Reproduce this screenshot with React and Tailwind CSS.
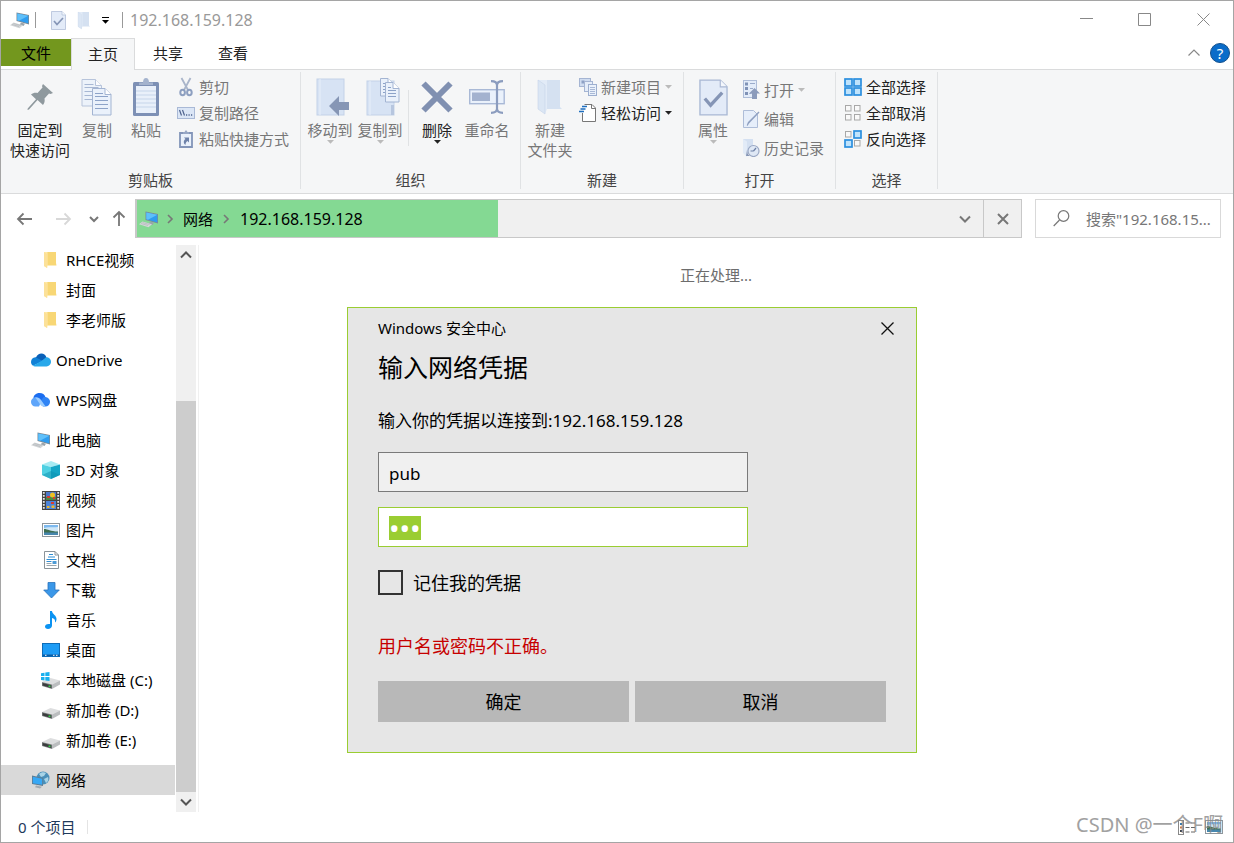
import React, { useEffect, useRef } from "react";

/* ---------- icons ---------- */

const PcIcon = ({ className = "" }) => (
  <svg width="20" height="18" viewBox="0 0 20 18" className={className}>
    <path d="M6.5 1.5 19 4v9.5L6.5 10z" fill="#7d8a94" />
    <path d="M7.3 2.5 18.3 4.7v7.7L7.3 9.2z" fill="#2f9df0" />
    <path d="M7.3 2.5 18.3 4.7 9 9.7l-1.7-.5z" fill="#5fc0fa" />
    <path d="m11 11.5 4 1.2-1.5 2.3-4-1z" fill="#9aa4ab" />
    <path d="m3.5 11.5 9.5 2.7-3.5 3L0 14.3z" fill="#d3d6d8" />
    <path d="m3.5 12.5 7 2m-8.5-1 7 2" stroke="#b1b6ba" strokeWidth=".7" />
  </svg>
);

const DocCheckIcon = ({ width, height }) => (
  <svg width={width} height={height} viewBox="0 0 30 38">
    <path d="M1 1h21l7 7v29H1z" fill="#e3ebf8" stroke="#a9b8d4" strokeWidth="1.4" />
    <path d="M22 1v7h7" fill="#f4f7fc" stroke="#a9b8d4" strokeWidth="1.2" />
    <path d="m6 20 6 7 12-13" fill="none" stroke="#8595b6" strokeWidth="3.4" />
  </svg>
);

const FolderPaleIcon = ({ width, height }) => (
  <svg width={width} height={height} viewBox="0 0 26 38">
    <path d="M9 2h14v27l2 2H9z" fill="#d5e1f1" />
    <path d="M1 2h9v29l-2 5-7-5z" fill="#e2ebf7" />
    <path d="M1 2 8 7v29l-7-5z" fill="#dbe6f4" stroke="#c7d5e9" strokeWidth=".6" />
  </svg>
);

const PinIcon = () => (
  <svg width="26" height="26" viewBox="0 0 26 26" fill="#8f999e">
    <path d="m16 0 10 9-2.5 1-1.5-.5-4.5 5c.5 2.5 0 4.5-1.5 6.5L10.5 16 2 25.5.5 26l.2-1.5L9 15.2 4 10.5C6 9 8 8.5 10.5 9l5-5.5L15 2z" />
  </svg>
);

const PageLines = ({ x, y, w = 18, h = 25, step = 3 }) => (
  <g transform={`translate(${x} ${y})`}>
    <path d={`M.5.5H${w - 6}L${w} 6.5V${h}H.5z`} fill="#eaf1fb" stroke="#a3b4d2" />
    <path d={`M${w - 6} .5v6h6`} fill="#fff" stroke="#a3b4d2" />
    {Array.from({ length: Math.floor((h - 9) / step) }, (_, i) => (
      <path key={i} d={`M3 ${8.5 + i * step}h${w - 6}`} stroke="#8da3c8" />
    ))}
    <path d={`M3 5.5h${w - 11}`} stroke="#8da3c8" />
  </g>
);

const CopyIcon = () => (
  <svg width="32" height="38" viewBox="0 0 32 38">
    <g opacity=".75">
      <PageLines x={0.5} y={1} w={20} h={27} step={4} />
    </g>
    <PageLines x={11} y={10} w={19} h={27} step={4} />
  </svg>
);

const PasteIcon = () => (
  <svg width="26" height="38" viewBox="0 0 26 38">
    <rect x="0" y="4" width="26" height="34" rx="1.5" fill="#7d90b5" />
    <rect x="3" y="8" width="20" height="27" fill="#e9f0fa" />
    <path d="M3 13h20M3 17h20M3 21h20M3 25h20M3 29h20" stroke="#c6d5ea" />
    <path d="M6 7V4.5h4C10 2 11 0 13 0s3 2 3 4.5h4V7z" fill="#a4b3ce" />
  </svg>
);

const CutIcon = () => (
  <svg width="14" height="20" viewBox="0 0 14 20" fill="none" stroke="#8d9fc0">
    <path d="M2.5 1 9 13M11.5 1 5 13" stroke="#a9b5ca" strokeWidth="1.8" />
    <ellipse cx="3.6" cy="15.5" rx="2.3" ry="2.8" strokeWidth="2" />
    <ellipse cx="10.4" cy="15.5" rx="2.3" ry="2.8" strokeWidth="2" />
  </svg>
);

const CopyPathIcon = () => (
  <svg width="18" height="12" viewBox="0 0 18 12">
    <rect x=".5" y=".5" width="17" height="11" fill="#dbe6f6" stroke="#a9b9d6" />
    <path d="m2.5 3 2 5.5M5.5 3l2 5.5" stroke="#4f648f" strokeWidth="1.2" />
    <path d="M9 8h1.2M11.5 8h1.2M14 8h1.2" stroke="#4f648f" strokeWidth="1.4" />
  </svg>
);

const PasteLinkIcon = () => (
  <svg width="14" height="18" viewBox="0 0 14 18">
    <path d="M1 3h12v14H1z" fill="#eaf1fb" stroke="#8395b9" strokeWidth="1.8" />
    <path d="M4 4V2h1.5L7 0l1.5 2H10v2z" fill="#97a7c5" />
    <path d="M5 7.5h5v5L8.5 11C7 12 6.5 13 6.5 15 4 13 4.5 10.5 6.5 9z" fill="#6e82aa" />
  </svg>
);

const MoveToIcon = () => (
  <svg width="34" height="38" viewBox="0 0 34 38" className="ml-[6px]">
    <rect x="1" y="1" width="27" height="36" fill="#d7e3f4" stroke="#c3d1e8" />
    <path d="M4 1v36" stroke="#e8eff9" />
    <path d="M13 28 23 18v6h10v8H23v6z" fill="#8696b5" />
  </svg>
);

const CopyToIcon = () => (
  <svg width="34" height="38" viewBox="0 0 34 38" className="ml-[6px]">
    <rect x="1" y="3" width="27" height="34" fill="#d7e3f4" stroke="#c3d1e8" />
    <path d="M4 3v34" stroke="#e8eff9" />
    <path d="M25 27h3v10h-3z" fill="#b7c6df" />
    <PageLines x={14} y={0} w={14} h={18} />
    <PageLines x={19} y={4} w={14} h={20} />
  </svg>
);

const DeleteIcon = () => (
  <svg width="32" height="32" viewBox="0 0 32 32">
    <path d="m2.5 2.5 27 27m0-27-27 27" stroke="#8090b1" strokeWidth="6" />
  </svg>
);

const RenameIcon = () => (
  <svg width="36" height="34" viewBox="0 0 36 34" fill="none">
    <rect x=".7" y="9.7" width="34.5" height="14" fill="#eaf1fb" stroke="#a9b9d6" strokeWidth="1.4" />
    <rect x="3" y="12.5" width="18" height="8.5" fill="#a3b2cf" />
    <path d="M22 1.2c3 0 6 1 6 4v23.6c0 3-3 4-6 4M34 1.2c-3 0-6 1-6 4v23.6c0 3 3 4 6 4" stroke="#8b9cbe" strokeWidth="2.2" />
  </svg>
);

const NewItemIcon = () => (
  <svg width="18" height="18" viewBox="0 0 18 18">
    <rect x=".5" y=".5" width="11" height="8" fill="#cfdcf0" stroke="#a5b5d3" />
    <rect x="2.5" y="2.5" width="3" height="3" fill="#8ea1c5" />
    <rect x="5.5" y="3.5" width="8" height="10" fill="#e5edf9" stroke="#a5b5d3" />
    <rect x="9.5" y="6.5" width="8" height="11" fill="#eaf1fb" stroke="#9dafcf" />
    <path d="M11 9.5h5M11 11.5h5M11 13.5h5M11 15.5h5" stroke="#a9b9d6" />
  </svg>
);

const EasyAccessIcon = () => (
  <svg width="18" height="18" viewBox="0 0 18 18" fill="none">
    <path d="M3.5 9v8.5h13V4L13 .5H5.5" fill="#fff" stroke="#777" />
    <path d="M12.5.5v4h4" stroke="#777" />
    <path d="M3 2.5h5M1.5 5h5M0 7.5h5" stroke="#1f6fc0" strokeWidth="1.3" />
  </svg>
);

const OpenIcon = () => (
  <svg width="17" height="19" viewBox="0 0 17 19">
    <rect x=".5" y=".5" width="13" height="17" fill="#e3ecf9" stroke="#aebdd8" />
    <path d="M2 2.5h3v3H2zM2 7h3v3H2zM2 12h3v3H2z" fill="#7f92b6" />
    <path d="M7 3.5h5M7 8.5h3M6.5 13.5h2" stroke="#9aabca" />
    <path d="m11.5 8 5.5 5.5h-3V19H9v-5.5H6z" fill="#8b9bbb" />
  </svg>
);

const EditIcon = () => (
  <svg width="17" height="18" viewBox="0 0 17 18">
    <path d="M.5.5h10l4 4v13H.5z" fill="#e6eefa" stroke="#aebdd8" />
    <path d="M16.5 2.5 6 13.5 4.5 16l-.8-.8L5 12 15.5 1.5z" fill="#8fa0c1" />
  </svg>
);

const HistoryIcon = () => (
  <svg width="18" height="18" viewBox="0 0 18 18">
    <path d="M1 0h10v14H1z" fill="#d4e0f1" />
    <path d="m1 0 4 2.5V18l-4-4z" fill="#e2ebf7" />
    <circle cx="11.5" cy="12" r="5.5" fill="#dfe8f5" stroke="#9aa8c4" strokeWidth="1.2" />
    <path d="M11.5 12 14 9M11.5 12h-3" stroke="#6d7fa5" strokeWidth="1.2" />
    <path d="M5 11c0 3 1 5 3 6H4z" fill="#8696b5" />
  </svg>
);

const GridIcon = ({ on }) => (
  <svg width="18" height="18" viewBox="0 0 18 18">
    {[[0, 0], [9, 0], [0, 9], [9, 9]].map(([x, y], i) =>
      on[i] ? (
        <rect key={i} x={x + 1} y={y + 1} width="7" height="7" fill="#bfe3fc" stroke="#2b8fdf" strokeWidth="1.7" />
      ) : (
        <rect key={i} x={x + 1.5} y={y + 1.5} width="5.5" height="5.5" fill="#f9f9f9" stroke="#a8a8a8" />
      )
    )}
  </svg>
);

const Caret = ({ className = "" }) => (
  <svg width="7" height="4" viewBox="0 0 7 4" className={className}>
    <path d="M0 0h7L3.5 3.7z" fill="currentColor" />
  </svg>
);

const FolderIcon = () => (
  <svg width="14" height="18" viewBox="0 0 14 18">
    <path d="M2 1h10v11l.5 2.5H2z" fill="#f8d775" />
    <path d="M0 1h3.5v13L3 17l-3-2z" fill="#ffe9a6" />
    <path d="M0 1 3.2 3v14L0 15z" fill="#fce199" />
  </svg>
);

const OneDriveIcon = () => (
  <svg width="20" height="14" viewBox="0 0 20 14">
    <path d="M5 4.5C7-1 14-1 15.5 4.5L10 9 4 5z" fill="#0a60b8" />
    <path d="M4.5 4.3C1.5 4.5 0 6.500 0 9c0 1.500.8 3 2 3.800L12 8z" fill="#1181d6" />
    <path d="M15 4.3c3 0 5 2 5 4.500s-2 4.700-4.500 4.700H4c-1 0-1.600-.3-2-.7L12 7z" fill="#28a8ea" />
  </svg>
);

const WpsIcon = () => (
  <svg width="20" height="14" viewBox="0 0 20 14">
    <path d="M2.5 6C2 2.500 5 0 8.500 0c3 0 5.300 1.500 6 4.200L11 10z" fill="#1b6df0" />
    <path d="M4 4.300C1.500 4.800 0 6.800 0 9c0 2.600 2 4.500 4.300 4.500H8L10 9z" fill="#5ea5fa" />
    <path d="M12.500 4.200c3.500-.8 6.500 1.600 6.500 4.700 0 2.600-2 4.600-4.700 4.600H12L9.500 8z" fill="#2f84f5" />
    <path d="M4 4.300c2.600-.5 4.500.5 6 2.700l3.500 5c.5.800 1 1.300 1.800 1.500H13c-2 0-3-.8-4-2.200L7.500 9C6.500 7.500 5.500 6 4 4.300z" fill="#9accff" />
  </svg>
);

const CubeIcon = () => (
  <svg width="18" height="18" viewBox="0 0 18 18">
    <path d="m9 0 9 3.500L9 6 0 3.500z" fill="#a6ebf3" />
    <path d="M0 3.500 9 6v12l-9-4z" fill="#4ed0e2" />
    <path d="M18 3.500 9 6v12l9-4z" fill="#14a6c6" />
    <path d="m0 14 9-4 9 4-9 4z" fill="#0b8fae" opacity=".5" />
  </svg>
);

const VideoIcon = () => (
  <svg width="18" height="19" viewBox="0 0 18 19">
    <path d="M0 0h18v19H0z" fill="#444" />
    <path d="M1.8 1v18M16.2 1v18" stroke="#e8e8e8" strokeWidth="1.8" strokeDasharray="1.7 1.3" />
    <path d="M4 1h10v8H4z" fill="#4d78c9" />
    <path d="M4 10h10v8H4z" fill="#4d84d9" />
    <path d="M4 6h10v3H4z" fill="#4c8b45" />
    <circle cx="10.5" cy="4" r="2.5" fill="#f0c221" />
    <path d="M5 5h3v2H5zM11 6h2v2h-2zM9 11h3v2H9z" fill="#da3b2d" />
    <path d="M5 15h2.5v2H5zM9.500 14.500h3V17h-3z" fill="#e9b62e" />
  </svg>
);

const PictureIcon = () => (
  <svg width="18" height="14" viewBox="0 0 18 14">
    <rect x=".5" y=".5" width="17" height="13" fill="#fff" stroke="#8f979d" />
    <path d="M2 2h14v10H2z" fill="#7db9ef" />
    <path d="M2 5c4-1.500 8 0 14-1v5H2z" fill="#cfe7f8" />
    <path d="M2 6c4 0 6 2.500 14 2.500V10H2z" fill="#3e6e50" />
    <path d="M2 9.500h14V12H2z" fill="#4787ae" />
  </svg>
);

const DocIcon = () => (
  <svg width="15" height="18" viewBox="0 0 15 18">
    <path d="M.5.5H11L14.5 4v13.500H.5z" fill="#fff" stroke="#8a9399" />
    <path d="M11 .5V4h3.500" fill="none" stroke="#8a9399" />
    <path d="M5 3.500h4M4 6h7M2.500 8.500h10M2.500 10.500h5" stroke="#2f8ed4" strokeWidth="1.2" />
    <path d="M2.500 12.500h5M2.500 14.500h10" stroke="#9aa6ae" />
    <path d="M8.500 10h4v3h-4z" fill="#4d9bd5" />
  </svg>
);

const DownloadIcon = () => (
  <svg width="17" height="17" viewBox="0 0 17 17">
    <path d="M5 .5h7V8h4.300l-7.800 8L.7 8H5z" fill="#3a97e8" stroke="#2a72bb" strokeWidth=".8" />
  </svg>
);

const MusicIcon = () => (
  <svg width="12" height="18" viewBox="0 0 12 18" fill="#0b93f2">
    <path d="M5 0h2c0 3 5 4.500 4.500 8.500-.2 1.500-.8 2.500-1.500 3C10.500 8.500 9 7.500 7 7v7.500C7 16.500 5 18 3 18s-3-1-3-2.500S1.500 12.500 5 13z" />
  </svg>
);

const DesktopIcon = () => (
  <svg width="18" height="14" viewBox="0 0 18 14">
    <rect x=".5" y=".5" width="17" height="13" fill="#1e9cf5" stroke="#0d6cb8" />
    <path d="M1 11.500h16V13H1z" fill="#0a5ca5" />
    <path d="M3 12.300h1.500M11 12.300h1.500M14 12.300h1.500" stroke="#fff" />
  </svg>
);

const DriveIcon = ({ system }) => (
  <svg width="20" height="17" viewBox="0 0 20 17">
    <path d="M1 10 9.500 6 19 8.500 11 12.500z" fill="#dddedf" />
    <path d="m1 10 10 2.500V17L1 14z" fill="#7b7e80" />
    <path d="m1.700 11 8.600 2.200v2.800l-8.600-2.500z" fill="#3b3d3e" />
    <path d="M11 12.500 19 8.500v4L11 17z" fill="#bbbdbf" />
    <path d="M7.500 13.500h2V15h-2z" fill="#33d24a" />
    {system && <path d="M0 1.200 3.500.7v3.400H0zM4.300.6 8.500 0v4.100H4.300zM0 5h3.500v3.400L0 8zM4.300 5h4.200v4l-4.200-.5z" fill="#19b0ee" />}
  </svg>
);

const NetworkIcon = () => (
  <svg width="20" height="18" viewBox="0 0 20 18">
    <circle cx="12" cy="7" r="6.5" fill="#4a8fb8" />
    <path d="M8 3c2-2 5-2.500 7-1l-2 3-3 1zM13 8l4-2c1 2 0 5-2 6z" fill="#a8d3e6" />
    <path d="M1 4.500 12 7v8L1 13z" fill="#5d7c93" />
    <path d="M1.800 5.700 11.200 7.700v6l-9.400-1.500z" fill="#37a8f5" />
    <path d="m5 14.500 6 1.200-2 1.800-5-1.200z" fill="#a3abb1" />
  </svg>
);

const Chevron = ({ d, size = 12, width = 2, className = "" }) => (
  <svg width={size} height={size} viewBox="0 0 12 12" fill="none" stroke="currentColor" strokeWidth={width} className={className}>
    <path d={d} />
  </svg>
);

/* ---------- ribbon pieces ---------- */

const BigButton = ({ icon, lines, className = "text-[#777]", caret }) => (
  <button className={`flex flex-col items-center whitespace-nowrap leading-5 ${className}`}>
    <span className="flex h-[42px] items-center pb-1">{icon}</span>
    {lines.map((line) => (
      <span key={line}>{line}</span>
    ))}
    {caret && <Caret className={caret} />}
  </button>
);

const SmallButton = ({ icon, label, className = "h-[26px] text-[#777]", caret }) => (
  <button className={`flex items-center gap-1 whitespace-nowrap ${className}`}>
    <span className="flex w-[18px] justify-center">{icon}</span>
    <span>{label}</span>
    {caret && <Caret className={caret} />}
  </button>
);

const Group = ({ label, className, children }) => (
  <div className={`flex shrink-0 flex-col justify-between pb-[3px] ${className}`}>
    <div className="flex grow items-start">{children}</div>
    <div className="text-center leading-5 text-[#444]">{label}</div>
  </div>
);

const Divider = () => <div className="mt-[2px] mb-1 w-px shrink-0 bg-[#e0e2e4]" />;

const Ribbon = () => (
  <div className="flex h-[124px] border-b border-[#dadbdc] bg-[#f5f6f7]">
    <Group label="剪贴板" className="w-[299px]">
      <div className="flex pt-2">
        <BigButton icon={<PinIcon />} lines={["固定到", "快速访问"]} className="w-[78px] text-[#222]" />
        <BigButton icon={<CopyIcon />} lines={["复制"]} className="w-[36px] text-[#777]" />
        <BigButton icon={<PasteIcon />} lines={["粘贴"]} className="w-[62px] text-[#777]" />
      </div>
      <div className="pt-1">
        <SmallButton icon={<CutIcon />} label="剪切" />
        <SmallButton icon={<CopyPathIcon />} label="复制路径" />
        <SmallButton icon={<PasteLinkIcon />} label="粘贴快捷方式" />
      </div>
    </Group>
    <Divider />
    <Group label="组织" className="w-[219px]">
      <div className="flex pt-2 pl-1">
        <BigButton icon={<MoveToIcon />} lines={["移动到"]} className="w-[50px] text-[#777]" caret="text-[#bbb]" />
        <BigButton icon={<CopyToIcon />} lines={["复制到"]} className="w-[50px] text-[#777]" caret="text-[#bbb]" />
        <div className="mx-[3px] mt-3 h-[56px] w-px bg-[#e0e2e4]" />
        <BigButton icon={<DeleteIcon />} lines={["删除"]} className="w-[50px] text-[#222]" caret="text-[#222]" />
        <BigButton icon={<RenameIcon />} lines={["重命名"]} className="w-[50px] text-[#777]" />
      </div>
    </Group>
    <Divider />
    <Group label="新建" className="w-[162px]">
      <div className="pt-2">
        <BigButton icon={<FolderPaleIcon width={26} height={38} />} lines={["新建", "文件夹"]} className="w-[58px] text-[#777]" />
      </div>
      <div className="pt-1">
        <SmallButton icon={<NewItemIcon />} label="新建项目" caret="text-[#bbb]" />
        <SmallButton icon={<EasyAccessIcon />} label="轻松访问" className="h-[26px] text-[#222]" caret="text-[#222]" />
      </div>
    </Group>
    <Divider />
    <Group label="打开" className="w-[151px]">
      <div className="pt-2">
        <BigButton icon={<DocCheckIcon width={29} height={37} />} lines={["属性"]} className="w-[58px] text-[#777]" caret="text-[#bbb]" />
      </div>
      <div className="pt-[5px]">
        <SmallButton icon={<OpenIcon />} label="打开" className="h-[29px] text-[#777]" caret="text-[#bbb]" />
        <SmallButton icon={<EditIcon />} label="编辑" className="h-[29px] text-[#777]" />
        <SmallButton icon={<HistoryIcon />} label="历史记录" className="h-[29px] text-[#777]" />
      </div>
    </Group>
    <Divider />
    <Group label="选择" className="w-[101px]">
      <div className="pt-1 pl-2">
        <SmallButton icon={<GridIcon on={[1, 1, 1, 1]} />} label="全部选择" className="h-[26px] text-[#222]" />
        <SmallButton icon={<GridIcon on={[0, 0, 0, 0]} />} label="全部取消" className="h-[26px] text-[#222]" />
        <SmallButton icon={<GridIcon on={[0, 1, 1, 0]} />} label="反向选择" className="h-[26px] text-[#222]" />
      </div>
    </Group>
    <Divider />
  </div>
);

/* ---------- sidebar ---------- */

const places = [
  { name: "RHCE视频", icon: <FolderIcon />, nested: true },
  { name: "封面", icon: <FolderIcon />, nested: true },
  { name: "李老师版", icon: <FolderIcon />, nested: true },
  { name: "OneDrive", icon: <OneDriveIcon />, gap: true },
  { name: "WPS网盘", icon: <WpsIcon />, gap: true },
  { name: "此电脑", icon: <PcIcon />, gap: true },
  { name: "3D 对象", icon: <CubeIcon />, nested: true },
  { name: "视频", icon: <VideoIcon />, nested: true },
  { name: "图片", icon: <PictureIcon />, nested: true },
  { name: "文档", icon: <DocIcon />, nested: true },
  { name: "下载", icon: <DownloadIcon />, nested: true },
  { name: "音乐", icon: <MusicIcon />, nested: true },
  { name: "桌面", icon: <DesktopIcon />, nested: true },
  { name: "本地磁盘 (C:)", icon: <DriveIcon system />, nested: true },
  { name: "新加卷 (D:)", icon: <DriveIcon />, nested: true },
  { name: "新加卷 (E:)", icon: <DriveIcon />, nested: true },
  { name: "网络", icon: <NetworkIcon />, gap: true, active: true },
];

const Sidebar = () => (
  <div className="flex shrink-0 border-r border-[#f0f0f0] pr-[2px]">
    <ul className="w-[174px] text-black">
      {places.map((p) => (
        <li key={p.name} className={p.gap ? "mt-[10px]" : ""}>
          <a
            href="#"
            className={`flex h-[30px] items-center gap-[5px] whitespace-nowrap ${p.nested ? "pl-10" : "pl-[30px]"} ${p.active ? "bg-[#d9d9d9]" : ""}`}
          >
            <span className="flex w-5 justify-center">{p.icon}</span>
            {p.name}
          </a>
        </li>
      ))}
    </ul>
    <div className="ml-px flex w-5 flex-col items-center bg-[#f0f0f0] text-[#555]">
      <Chevron d="M1 8.500 6 3.500l5 5" className="mt-1" />
      <div className="mt-[140px] w-full grow bg-[#cdcdcd]" />
      <Chevron d="M1 3.500 6 8.500l5-5" className="my-1" />
    </div>
  </div>
);

/* ---------- credential dialog ---------- */

const CredentialDialog = () => {
  const passwordRef = useRef(null);

  useEffect(() => {
    passwordRef.current.focus();
    passwordRef.current.select();
  }, []);

  return (
    <form
      className="absolute top-[62px] left-[148px] w-[570px] border border-[#9acd32] bg-[#e6e6e6] px-[30px] pb-[30px] text-[18px] text-black"
      onSubmit={(e) => e.preventDefault()}
    >
      <div className="flex h-10 items-center justify-between text-[15px]">
        <span>Windows 安全中心</span>
        <button type="button" aria-label="关闭" className="-mr-3 p-1">
          <svg width="13" height="13" viewBox="0 0 13 13" stroke="#111" strokeWidth="1.3">
            <path d="m.5.5 12 12m0-12-12 12" />
          </svg>
        </button>
      </div>
      <h1 className="text-[25px] leading-[38px]">输入网络凭据</h1>
      <p className="mt-[23px] text-[17px] leading-6">输入你的凭据以连接到:192.168.159.128</p>
      <input
        aria-label="用户名"
        defaultValue="pub"
        className="mt-[19px] block h-10 w-[370px] border border-[#7a7a7a] bg-[#f0f0f0] px-[10px] pt-[2px] text-[17px] outline-none"
      />
      <div className="mt-[15px] flex h-10 w-[370px] items-center border border-[#9acd32] bg-white px-[10px] pt-[2px]">
        <input
          ref={passwordRef}
          type="password"
          aria-label="密码"
          defaultValue="123"
          className="h-6 w-full overflow-clip text-[28px] leading-6 outline-none selection:bg-[#9acd32] selection:text-white"
        />
      </div>
      <label className="mt-[23px] flex h-[25px] items-center gap-[10px]">
        <input type="checkbox" className="size-[25px] appearance-none border-2 border-[#333]" />
        记住我的凭据
      </label>
      <p className="mt-[39px] leading-6 text-[#c60000]">用户名或密码不正确。</p>
      <div className="mt-[23px] flex gap-[6px]">
        <button className="h-[41px] flex-1 bg-[#b8b8b8]">确定</button>
        <button type="button" className="h-[41px] flex-1 bg-[#b8b8b8]">取消</button>
      </div>
    </form>
  );
};

/* ---------- window ---------- */

const TitleBar = () => (
  <div className="flex h-[38px] items-center pl-[9px] text-[16px] text-[#999]">
    <PcIcon />
    <div className="ml-[5px] h-4 w-px bg-[#999]" />
    <button aria-label="属性" className="ml-[15px]">
      <DocCheckIcon width={15} height={19} />
    </button>
    <button aria-label="新建文件夹" className="ml-[11px]">
      <FolderPaleIcon width={14} height={19} />
    </button>
    <button aria-label="自定义快速访问工具栏" className="ml-[11px] flex flex-col items-center gap-[2px] text-black">
      <span className="h-px w-[7px] bg-black" />
      <Caret />
    </button>
    <div className="ml-[13px] h-4 w-px bg-[#999]" />
    <span className="ml-[7px]">192.168.159.128</span>
    <div className="ml-auto flex pb-[2px] text-[#888]">
      <button aria-label="最小化" className="flex w-[58px] justify-center">
        <svg width="13" height="13" viewBox="0 0 13 13" stroke="currentColor"><path d="M0 5.500h13" /></svg>
      </button>
      <button aria-label="最大化" className="flex w-[58px] justify-center">
        <svg width="13" height="13" viewBox="0 0 13 13" fill="none" stroke="currentColor"><path d="M.5.5h12v12H.5z" /></svg>
      </button>
      <button aria-label="关闭" className="flex w-[60px] justify-center">
        <svg width="13" height="13" viewBox="0 0 13 13" stroke="currentColor"><path d="m.5.5 12 12m0-12-12 12" /></svg>
      </button>
    </div>
  </div>
);

const TabBar = () => (
  <div className="flex h-[31px] border-b border-[#dadbdc] text-[#222]">
    <button className="h-[27px] w-[70px] bg-[#73971e] text-black">文件</button>
    <button className="-mt-px -mb-px w-[64px] border border-b-0 border-[#dadbdc] bg-[#f5f6f7] pb-[2px]">主页</button>
    <button className="w-[66px] pb-[2px]">共享</button>
    <button className="w-[64px] pb-[2px]">查看</button>
    <div className="ml-auto flex items-center pr-[3px] pb-[2px]">
      <Chevron d="M.5 8.500 6 3l5.500 5.500" width={1.2} className="mr-[10px] text-[#888]" />
      <button aria-label="帮助" className="flex size-5 items-center justify-center rounded-full border border-[#14508c] bg-[#0a6cc9] text-white">?</button>
    </div>
  </div>
);

const loaded = 0.408;

const AddressBar = () => (
  <div className="flex items-center pt-[5px] pr-3 pb-[7px] text-[#777]">
    <div className="flex w-[134px] items-center pl-[15px]">
      <svg width="17" height="14" viewBox="0 0 17 14" fill="none" stroke="#777" strokeWidth="1.8"><path d="M16 7H2M7.500 1.500 2 7l5.500 5.500" /></svg>
      <svg width="17" height="14" viewBox="0 0 17 14" fill="none" stroke="#d8d8d8" strokeWidth="1.8" className="ml-[22px]"><path d="M1 7h14M9.500 1.500 15 7l-5.500 5.500" /></svg>
      <Chevron d="M2 4l4 4 4-4" className="ml-4" />
      <svg width="14" height="17" viewBox="0 0 14 17" fill="none" stroke="#777" strokeWidth="1.8" className="ml-3"><path d="M7 16V2M1.500 7.500 7 2l5.500 5.500" /></svg>
    </div>
    <div className="relative flex h-[39px] min-w-0 flex-1 items-center border border-l-2 border-[#c8c8c8] bg-[#f0f0f0]">
      {/* fills up behind the crumbs while the location loads */}
      <div className="absolute inset-y-0 left-0 bg-[#84d993]" style={{ width: `${loaded * 100}%` }} />
      <div className="relative flex grow items-center pl-[2px] text-black">
        <PcIcon />
        <Chevron d="M4 2l4 4-4 4" width={1.6} className="ml-[5px] text-[#777]" />
        <span className="ml-[7px]">网络</span>
        <Chevron d="M4 2l4 4-4 4" width={1.6} className="ml-[7px] text-[#777]" />
        <span className="ml-2 text-[16px]">192.168.159.128</span>
      </div>
      <button aria-label="历史位置" className="relative px-3">
        <Chevron d="M1 3.500 6 8.500l5-5" />
      </button>
      <button aria-label="停止" className="relative flex h-full w-[38px] items-center justify-center border-l border-[#c8c8c8]">
        <Chevron d="m1 1 10 10M11 1 1 11" />
      </button>
    </div>
    <label className="ml-[13px] flex h-[39px] w-[186px] items-center border border-[#d9d9d9] pl-[17px]">
      <svg width="17" height="17" viewBox="0 0 17 17" fill="none" stroke="#777" strokeWidth="1.2" className="shrink-0">
        <circle cx="10.5" cy="6" r="5.3" />
        <path d="M6.500 10 .7 16" />
      </svg>
      <input
        type="text"
        aria-label="搜索"
        placeholder={'搜索"192.168.15...'}
        className="ml-4 w-full min-w-0 outline-none placeholder:text-[#777]"
      />
    </label>
  </div>
);

const StatusBar = () => (
  <div className="relative flex h-[30px] items-center pr-[10px] pl-[17px] text-[#1e395b]">
    <span>0 个项目</span>
    <div className="ml-3 h-[14px] w-px bg-[#e4e4e4]" />
    <button aria-label="详细信息" className="ml-auto">
      <svg width="18" height="15" viewBox="0 0 18 15">
        <rect x=".5" y=".5" width="5" height="14" fill="#fff" stroke="#888" />
        <path d="M2 3h2v2H2z" fill="#3978b5" />
        <path d="M2 6.500h2v2H2z" fill="#c77c3c" />
        <path d="M2 10h2v2H2z" fill="#444" />
        <path d="M7.500 3h4M13 3h4M7.500 7.500h4M13 7.500h4M7.500 12h4M13 12h4" stroke="#666" />
      </svg>
    </button>
    <button aria-label="大图标" className="ml-[9px]">
      <PictureIcon />
    </button>
    <span className="pointer-events-none absolute right-[10px] bottom-[5px] text-[20px] leading-6 whitespace-nowrap text-[#8a8a8a] opacity-80">
      CSDN @一个F啊
    </span>
  </div>
);

const App = () => {
  return (
    <div className="flex min-h-screen flex-col border border-[#a5a5a5] bg-white font-['Noto_Sans','Noto_Sans_CJK_SC',sans-serif] text-[15px] leading-5">
      <TitleBar />
      <TabBar />
      <Ribbon />
      <AddressBar />
      <div className="flex grow">
        <Sidebar />
        <main className="relative grow">
          <p className="pt-5 text-center text-[#6d6d6d]">正在处理...</p>
          <CredentialDialog />
        </main>
      </div>
      <StatusBar />
    </div>
  );
};

export default App;
